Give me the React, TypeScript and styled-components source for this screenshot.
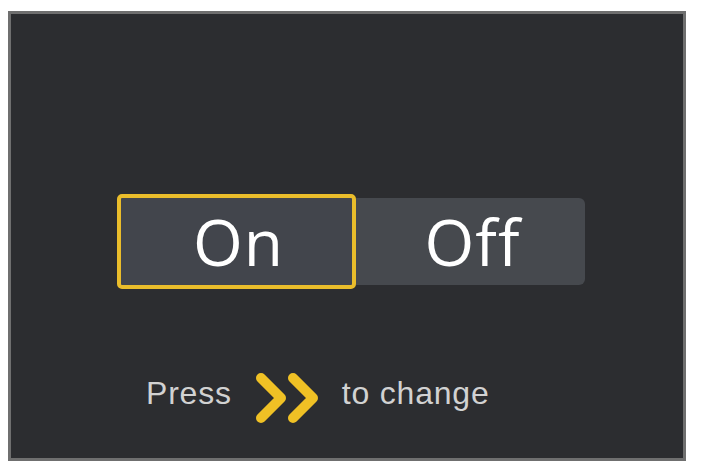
import styled, { createGlobalStyle } from "styled-components";

const GlobalStyle = createGlobalStyle`
  html, body {
    margin: 0;
    padding: 0;
    background: #ffffff;
  }
`;

const Screen = styled.div`
  box-sizing: border-box;
  width: 678px;
  height: 450px;
  margin: 11px 0 0 8px;
  border: 3px solid #6f6f6f;
  background-color: #2c2d30;
  display: flex;
  flex-direction: column;
  align-items: center;
  padding: 180px 0 0 8px;
`;

const Toggle = styled.div`
  display: flex;
  align-items: center;
`;

const Option = styled.div<{ selected?: boolean }>`
  box-sizing: border-box;
  display: flex;
  align-items: center;
  justify-content: center;
  width: ${(p) => (p.selected ? 239 : 229)}px;
  height: ${(p) => (p.selected ? 95 : 87)}px;
  border: ${(p) => (p.selected ? "4px solid #eabd2b" : "none")};
  border-radius: ${(p) => (p.selected ? "5px" : "0 6px 6px 0")};
  background-color: ${(p) => (p.selected ? "#42454c" : "#46494e")};
  color: #ffffff;
  font-family: "Open Sans", "DejaVu Sans", sans-serif;
  font-size: 64px;
  font-weight: 400;
  letter-spacing: 1px;
  padding-left: 4px;
`;

const Hint = styled.div`
  align-self: flex-start;
  display: flex;
  align-items: center;
  gap: 22px;
  margin: 81px 0 0 127px;
  color: #d2d2d2;
  font-family: "Liberation Sans", Arial, sans-serif;
  font-size: 32px;
  letter-spacing: 0.8px;
`;

const Label = styled.span`
  margin-top: -9px;
`;

function Chevrons() {
  return (
    <svg width="66" height="56" viewBox="0 0 66 56">
      <g
        fill="none"
        stroke="#f0c125"
        strokeWidth="10"
        strokeLinecap="round"
        strokeLinejoin="round"
      >
        <path d="M7 8 L27 28 L7 48" />
        <path d="M39 8 L59 28 L39 48" />
      </g>
    </svg>
  );
}

export default function App() {
  return (
    <>
      <GlobalStyle />
      <Screen>
        <Toggle>
          <Option selected>On</Option>
          <Option>Off</Option>
        </Toggle>
        <Hint>
          <Label>Press</Label>
          <Chevrons />
          <Label>to change</Label>
        </Hint>
      </Screen>
    </>
  );
}
